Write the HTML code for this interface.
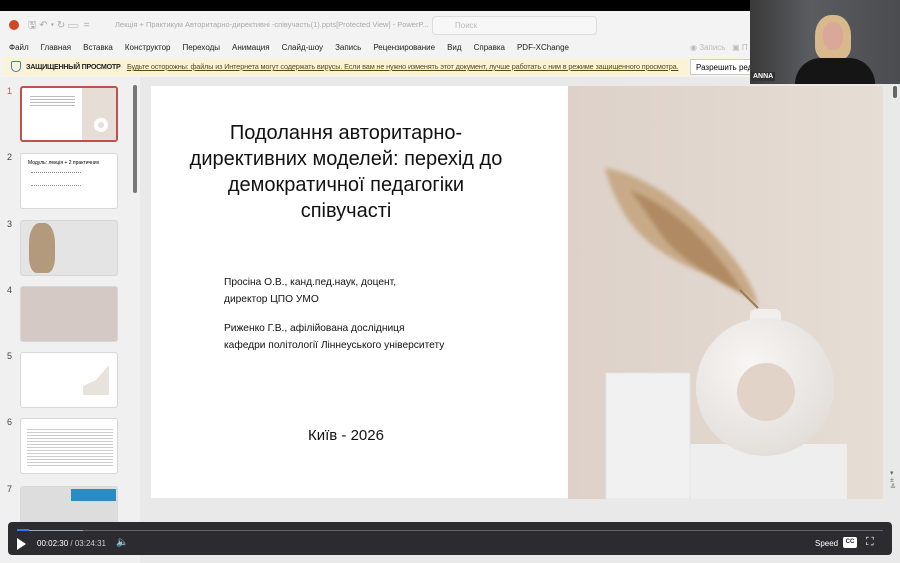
<!DOCTYPE html>
<html><head><meta charset="utf-8"><style>
*{margin:0;padding:0;box-sizing:border-box}
body{width:900px;height:563px;overflow:hidden;background:#000;font-family:"Liberation Sans",sans-serif;position:relative}
.a{position:absolute}
.menu span{margin-right:12px}
.th{position:absolute;left:20px;width:98px;height:56px;background:#fff;border:1px solid #d8d8d8;border-radius:3px;overflow:hidden}
.num{position:absolute;left:7px;font-size:9px;color:#444}
.sl{position:absolute;color:#111;font-family:"Liberation Sans","DejaVu Sans",sans-serif}
</style></head><body>
<div class="a" style="left:0;top:11px;width:900px;height:66px;background:#f3f3f3"></div>
<div class="a" style="left:9px;top:20px;width:10px;height:10px;border-radius:50%;background:#d24726"></div>
<div class="a" style="left:28px;top:18px;font-size:10px;color:#aaa">🖫 ↶ ▾ ↻ ▭ &nbsp;=</div>
<div class="a" style="left:115px;top:20px;font-size:7.5px;color:#aaa;white-space:nowrap">Лекція + Практикум Авторитарно-директивні -співучасть(1).ppts[Protected View] - PowerP...</div>
<div class="a" style="left:432px;top:16px;width:165px;height:19px;border:1px solid #ddd;border-radius:4px;background:#f7f7f7;font-size:8px;color:#bbb;padding:4px 0 0 22px">Поиск</div>
<div class="a menu" style="left:9px;top:43px;font-size:8px;color:#222;white-space:nowrap"><span>Файл</span><span>Главная</span><span>Вставка</span><span>Конструктор</span><span>Переходы</span><span>Анимация</span><span>Слайд-шоу</span><span>Запись</span><span>Рецензирование</span><span>Вид</span><span>Справка</span><span>PDF-XChange</span></div>
<div class="a" style="left:690px;top:43px;font-size:8px;color:#bbb">◉ Запись &nbsp; ▣ П</div>
<div class="a" style="left:3px;top:58px;width:747px;height:18px;background:#fbf3d5;border-radius:3px"></div>
<div class="a" style="left:11px;top:61px;width:10px;height:11px;border:1px solid #3a7bd5;border-radius:2px 2px 5px 5px"></div>
<div class="a" style="left:26px;top:62px;font-size:7.2px;font-weight:bold;color:#222;letter-spacing:-0.3px">ЗАЩИЩЕННЫЙ ПРОСМОТР</div>
<div class="a" style="left:127px;top:62px;width:558px;overflow:hidden;font-size:7.3px;color:#5a4a10;text-decoration:underline;white-space:nowrap;letter-spacing:-0.15px">Будьте осторожны: файлы из Интернета могут содержать вирусы. Если вам не нужно изменять этот документ, лучше работать с ним в режиме защищенного просмотра.</div>
<div class="a" style="left:690px;top:59px;width:62px;height:16px;background:#fff;border:1px solid #ccc;font-size:8px;padding:3px 0 0 5px;white-space:nowrap;overflow:hidden">Разрешить редак</div>
<div class="a" style="left:0;top:77px;width:140px;height:486px;background:#f0f0f0"></div>
<div class="a" style="left:133px;top:85px;width:4px;height:108px;background:#777;border-radius:2px"></div>
<div class="num" style="top:86px;color:#c0504d">1</div>
<div class="th" style="top:86px;border:2px solid #c0504d"><div class="a" style="left:8px;top:6px;width:45px;height:12px;background:repeating-linear-gradient(#fff 0 2px,#bbb 2px 3px)"></div><div class="a" style="left:60px;top:0;width:36px;height:54px;background:#e6ddd6"></div><div class="a" style="left:72px;top:30px;width:14px;height:14px;border:4px solid #fff;border-radius:50%"></div></div>
<div class="num" style="top:152px">2</div>
<div class="th" style="top:153px"><div class="a" style="left:7px;top:6px;font-size:5px">Модуль: лекція + 2 практичних</div><div class="a" style="left:10px;top:18px;width:50px;height:14px;border-top:1px dotted #999;border-bottom:1px dotted #999"></div></div>
<div class="num" style="top:219px">3</div>
<div class="th" style="top:220px;background:#e4e4e4"><div class="a" style="left:8px;top:2px;width:26px;height:50px;background:#b49a7c;border-radius:40% 40% 30% 30%"></div></div>
<div class="num" style="top:285px">4</div>
<div class="th" style="top:286px;background:#d4c9c4"></div>
<div class="num" style="top:351px">5</div>
<div class="th" style="top:352px"><div class="a" style="left:62px;top:12px;width:26px;height:30px;background:#e8e2dc;clip-path:polygon(0 100%,0 70%,50% 50%,100% 0,100% 100%)"></div></div>
<div class="num" style="top:417px">6</div>
<div class="th" style="top:418px"><div class="a" style="left:6px;top:8px;width:86px;height:40px;background:repeating-linear-gradient(#fff 0 2px,#ccc 2px 3px)"></div></div>
<div class="num" style="top:484px">7</div>
<div class="th" style="top:486px;height:40px;background:#ddd"><div class="a" style="left:50px;top:2px;width:45px;height:12px;background:#2b8cc4"></div></div>
<div class="a" style="left:140px;top:77px;width:760px;height:486px;background:#e9e9e9"></div>
<div class="a" style="left:151px;top:86px;width:732px;height:412px;background:#fff"></div>
<div class="a" style="left:893px;top:86px;width:4px;height:12px;background:#666;border-radius:2px"></div>
<div class="a" style="left:890px;top:470px;font-size:7px;color:#666;line-height:7px">▾<br>±<br>≚</div>
<div class="sl" style="left:151px;top:120px;width:390px;text-align:center;font-size:20px;line-height:26px">Подолання авторитарно-<br>директивних моделей: перехід до<br>демократичної педагогіки<br>співучасті</div>
<div class="sl" style="left:224px;top:275px;font-size:10.2px;line-height:16.5px">Просіна О.В., канд.пед.наук, доцент,<br>директор ЦПО УМО</div>
<div class="sl" style="left:224px;top:321px;font-size:10.2px;line-height:16.5px">Риженко Г.В., афілійована дослідниця<br>кафедри політології Ліннеуського університету</div>
<div class="sl" style="left:308px;top:427px;font-size:15px">Київ - 2026</div>
<svg class="a" style="left:568px;top:86px" width="315" height="413" viewBox="568 86 315 413">
<defs><linearGradient id="bg" x1="0" y1="0" x2="1" y2="0"><stop offset="0" stop-color="#ddd1c9"/><stop offset="1" stop-color="#e6ddd5"/></linearGradient>
<radialGradient id="vs" cx="0.4" cy="0.35" r="0.7"><stop offset="0" stop-color="#f8f6f4"/><stop offset="1" stop-color="#e2ddd9"/></radialGradient>
<filter id="bl"><feGaussianBlur stdDeviation="2"/></filter></defs>
<rect x="568" y="86" width="315" height="413" fill="url(#bg)"/>
<g filter="url(#bl)">
<path d="M605,168 C650,175 700,215 735,260 C750,280 758,300 758,306 C740,290 720,280 700,272 C670,260 640,240 625,215 C615,198 608,182 605,168Z" fill="#c8aa88"/>
<path d="M630,190 C670,205 710,240 745,295 C715,280 685,262 665,240Z" fill="#b08a62"/>
</g>
<path d="M740,290 L758,308" stroke="#a07a55" stroke-width="2"/>
<rect x="688" y="444" width="159" height="55" fill="#eeeeee"/>
<rect x="606" y="373" width="84" height="126" fill="#f1f1f1"/>
<rect x="606" y="373" width="84" height="126" fill="none" stroke="#e2e2e2"/>
<rect x="750" y="309" width="31" height="20" rx="6" fill="#f1efed"/>
<circle cx="765" cy="387" r="69" fill="url(#vs)"/>
<circle cx="766" cy="392" r="29" fill="#e1d3c8"/>
</svg>
<div class="a" style="left:750px;top:0;width:150px;height:84px;background:linear-gradient(90deg,#3a3a3a,#5a5c60 40%,#4a4c50)"></div>
<div class="a" style="left:815px;top:15px;width:36px;height:45px;background:#d8b98c;border-radius:45% 45% 30% 30%"></div>
<div class="a" style="left:823px;top:22px;width:20px;height:28px;background:#d9a898;border-radius:45%"></div>
<div class="a" style="left:795px;top:58px;width:80px;height:26px;background:#151515;border-radius:30px 30px 0 0"></div>
<div class="a" style="left:751px;top:72px;background:#333;color:#fff;font-size:7px;font-weight:bold;padding:1px 2px">ANNA</div>
<div class="a" style="left:8px;top:522px;width:884px;height:33px;background:#2c2c30;border-radius:4px"></div>
<div class="a" style="left:17px;top:530px;width:866px;height:1px;background:#666"></div>
<div class="a" style="left:17px;top:530px;width:66px;height:1px;background:#9ab"></div>
<div class="a" style="left:17px;top:529px;width:12px;height:2px;background:#2d7be0"></div>
<div class="a" style="left:17px;top:538px;width:0;height:0;border-left:9px solid #fff;border-top:6px solid transparent;border-bottom:6px solid transparent"></div>
<div class="a" style="left:37px;top:539px;font-size:8px;color:#fff">00:02:30 <span style="color:#ccc">/ 03:24:31</span></div>
<div class="a" style="left:116px;top:537px;font-size:10px;color:#fff">🔈</div>
<div class="a" style="left:815px;top:539px;font-size:8px;color:#fff">Speed</div>
<div class="a" style="left:843px;top:537px;width:14px;height:11px;background:#fff;border-radius:2px;font-size:6px;font-weight:bold;color:#222;text-align:center;line-height:11px">CC</div>
<div class="a" style="left:866px;top:536px;font-size:11px;color:#fff">⛶</div>
</body></html>
